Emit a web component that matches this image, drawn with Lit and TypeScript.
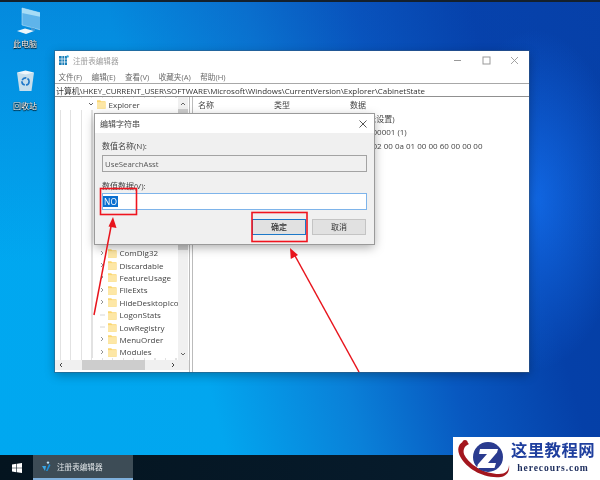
import { LitElement, html, css, svg } from "lit";
import { customElement } from "lit/decorators.js";

const folder = html`<svg class="folder" viewBox="0 0 9 10"><path d="M0 1h3.4l1 1H9v8H0z" fill="#fbd66f"/><path d="M0 3h9v7H0z" fill="#fde7a6"/></svg>`;
const chevR = html`<svg class="chev" viewBox="0 0 6 6"><path d="M2 1l2 2-2 2" fill="none" stroke="#888" stroke-width=".9"/></svg>`;
const dash = html`<svg class="chev" viewBox="0 0 6 6"><path d="M1 3h5" stroke="#ccc" stroke-width=".8"/></svg>`;

const TREE: [string, boolean][] = [
  ["ComDlg32", true], ["Discardable", true], ["FeatureUsage", true], ["FileExts", true],
  ["HideDesktopIco", true], ["LogonStats", false], ["LowRegistry", false], ["MenuOrder", true], ["Modules", true],
];

@customElement("app-root")
export class AppRoot extends LitElement {
  static styles = css`
    :host { display: block; width: 600px; height: 480px; overflow: hidden; font-family: "Open Sans","Noto Sans CJK SC",sans-serif; }
    * { box-sizing: border-box; }
    .screen { position: relative; width: 600px; height: 480px; display: flex; flex-direction: column; overflow: hidden; filter: blur(.4px);
      background:
        radial-gradient(ellipse 90px 170px at 535px 200px, rgba(20,115,245,.75), rgba(20,115,245,0)),
        linear-gradient(180deg, rgba(10,70,180,.3), rgba(10,70,180,0) 55%),
        linear-gradient(75deg, #00a8f0 0%, #02a6ef 32%, #0a80d8 51%, #0858c0 66%, #0540a8 82%, #053ea4 100%); }
    .topline { height: 2px; background: #14202c; flex: none; }
    .desk { flex: 1; display: flex; flex-direction: column; align-items: flex-start; padding: 5px 0 0 5px; gap: 19.5px; }
    .dicon { width: 40px; display: flex; flex-direction: column; align-items: center; gap: 1px; color: #fff; font-size: 8px; line-height: 11px; text-shadow: 0 0 1px #000, 0 1px 1px #000; }
    .dicon svg { width: 30px; height: 30px; display: block; }
    .win { position: absolute; left: 55px; top: 51px; width: 474px; height: 321px; background: #fff; box-shadow: 0 0 0 1px rgba(60,90,120,.5), 0 3px 10px rgba(0,0,0,.3); display: flex; flex-direction: column; font-size: 8px; color: #333; }
    .title { height: 18px; display: flex; align-items: center; padding: 0 0 0 4px; color: #a0a0a0; flex: none; font-size: 7.6px; }
    .title svg.app { width: 10px; height: 10px; margin-right: 4px; }
    .title .t { flex: 1; }
    .wbtn { width: 28.5px; display: flex; justify-content: center; }
    .wbtn svg { width: 9px; height: 9px; }
    .menu { height: 14px; display: flex; align-items: center; padding-left: 3.5px; gap: 9.5px; color: #6a6a6a; flex: none; font-size: 7.6px; }
    .addr { height: 14px; border-top: 1px solid #a8a8a8; border-bottom: 1px solid #909090; display: flex; align-items: center; padding-left: 1px; color: #333; flex: none; font-size: 7.93px; white-space: nowrap; overflow: hidden; }
    .panes { flex: 1; display: flex; min-height: 0; }
    .left { width: 135px; flex: none; display: flex; flex-direction: column; border-right: 1px solid #bbb; padding-bottom: 2px; }
    .treewrap { flex: 1; display: flex; min-height: 0; }
    .tree { flex: 1; min-width: 0; overflow: hidden; display: flex; flex-direction: column; background: repeating-linear-gradient(90deg, #fff 0 5px, #e2e2e2 5px 6px, #fff 6px 10.5px); padding-top: 1px; padding-bottom: 2px; }
    .row { height: 12.4px; flex: none; display: flex; align-items: center; gap: 3px; white-space: nowrap; font-size: 8px; color: #444; background: #fff; }
    .row.top { padding-left: 31px; margin-left: 2px; }
    .row.sub { margin-left: 37px; padding-left: 6px; border-left: 1px solid #e2e2e2; }
    .spacer { flex: 1; margin-left: 37px; background: #fff; border-left: 1px solid #e2e2e2; }
    .folder { width: 8.5px; height: 10px; flex: none; }
    .chev { width: 6px; height: 6px; flex: none; }
    .vbar { width: 10px; flex: none; margin-right: 1px; background: #f0f0f0; display: flex; flex-direction: column; align-items: center; }
    .vbar svg { width: 6px; height: 6px; flex: none; }
    .vbar .up { margin: 4px 0 2px; }
    .vbar .thumb { width: 10px; height: 141px; background: #cdcdcd; flex: none; }
    .vbar .fill { flex: 1; }
    .vbar .down { margin-bottom: 3px; }
    .hbar { height: 10px; flex: none; background: #f0f0f0; display: flex; align-items: center; padding: 0 3px; }
    .hbar .thumb { width: 63px; height: 10px; background: #cdcdcd; margin-left: 18px; margin-right: 25px; }
    .hbar svg { width: 6px; height: 6px; flex: none; }
    .right { flex: 1; margin-left: 2px; border-left: 1px solid #bbb; min-width: 0; padding: 0 0 0 5px; }
    .cols { display: grid; grid-template-columns: 76px 76px 1fr; line-height: 13.4px; white-space: nowrap; color: #444; font-size: 8px; }
    .cols.head { height: 15px; align-items: center; }
    .dlg { position: absolute; left: 95px; top: 114px; width: 279px; height: 130px; background: #f0f0f0; box-shadow: 0 0 0 1px #9a9a9a, 0 3px 10px rgba(0,0,0,.35); display: flex; flex-direction: column; font-size: 8px; color: #444; }
    .dtitle { height: 19px; background: #fff; display: flex; align-items: center; justify-content: space-between; padding: 0 7px 0 5px; flex: none; }
    .dtitle svg { width: 8px; height: 8px; }
    .dbody { padding: 6px 7px 0; display: flex; flex-direction: column; }
    .lbl { height: 13px; line-height: 13px; margin-bottom: 3px; }
    .lbl.second { margin-bottom: 1px; }
    .input { height: 17px; display: flex; align-items: center; padding-left: 2px; font-size: 7.8px; }
    .input.ro { background: #f0f0f0; border: 1px solid #a3a3a3; color: #555; margin-bottom: 6.5px; }
    .input.ed { background: #fff; border: 1px solid #7eb4ea; padding-left: 0; }
    .sel { background: #0a6fd0; color: #fff; width: 15px; margin-left: 0; text-align: center; line-height: 11px; font-size: 8.4px; }
    .btns { display: flex; justify-content: flex-end; gap: 6px; margin-top: 9px; padding-right: 1px; }
    .btn { width: 54px; height: 16px; background: #e1e1e1; border: 1px solid #c4c4c4; display: flex; align-items: center; justify-content: center; color: #333; }
    .btn.def { border: 1.5px solid #1c78c8; font-weight: 500; }
    .marks { position: absolute; inset: 0; width: 600px; height: 480px; pointer-events: none; }
    .bar { height: 25px; flex: none; background: linear-gradient(90deg, #04141f, #061a2a 60%, #062030); display: flex; align-items: stretch; }
    .start { width: 33px; display: flex; align-items: center; justify-content: center; }
    .start svg { width: 10px; height: 10px; }
    .task { width: 100px; background: #3d4c56; border-bottom: 2px solid #7fb0dc; display: flex; align-items: center; gap: 6px; padding-left: 8px; color: #dfe4e7; font-size: 7.6px; }
    .task svg { width: 10px; height: 11px; }
    .logo { position: absolute; left: 453px; top: 437px; width: 147px; height: 43px; background: #fff; display: flex; align-items: center; }
    .logo svg { width: 57px; height: 43px; flex: none; }
    .brand { width: 86px; display: flex; flex-direction: column; align-items: center; }
    .cn { font-size: 16.4px; line-height: 20px; font-weight: 700; color: #1f3f9e; letter-spacing: .4px; white-space: nowrap; margin-top: -4px; }
    .en { font-family: "Liberation Serif", serif; font-size: 9.6px; line-height: 12px; font-weight: 700; color: #1c2c5c; letter-spacing: .9px; margin-top: 2px; }
  `;

  render() {
    return html`<div class="screen">
      <div class="topline"></div>
      <div class="desk">
        <div class="dicon">
          <svg viewBox="0 0 30 30"><path d="M12 1l19 5v17L12 18z" fill="#5fb4ea"/><path d="M12 1l19 5v4L12 6z" fill="#a6dcf6"/><path d="M12 1l19 5v17L12 18z" fill="none" stroke="#b8e2f6" stroke-width=".6"/><path d="M21 20.5l4 1v2.5l-4-1z" fill="#3f96d4"/><path d="M7 24l8-2.5 9 2.5-8 3z" fill="#eef6fb"/></svg>
          <span>此电脑</span>
        </div>
        <div class="dicon">
          <svg viewBox="0 0 30 30"><path d="M7 3.5h17l-2.5 18.5H9.5z" fill="#c6deec"/><path d="M7 3.5l8.5-2 8.5 2-8.5 2z" fill="#eef6fb"/><circle cx="15.5" cy="12.5" r="3.6" fill="none" stroke="#1f78c8" stroke-width="1.6" stroke-dasharray="5 1.2"/></svg>
          <span>回收站</span>
        </div>
      </div>

      <div class="win">
        <div class="title">
          <svg class="app" viewBox="0 0 10 10"><rect y="1" width="8" height="9" fill="#1b7fb8"/><path d="M3 1v9M5.5 1v9M0 4h8M0 7h8" stroke="#fff" stroke-width=".7"/><circle cx="8.6" cy="1.4" r="1.2" fill="#39a9dc"/></svg>
          <span class="t">注册表编辑器</span>
          <span class="wbtn"><svg viewBox="0 0 9 9"><path d="M1 4.5h7" stroke="#999"/></svg></span>
          <span class="wbtn"><svg viewBox="0 0 9 9"><rect x="1" y="1" width="7" height="7" fill="none" stroke="#999"/></svg></span>
          <span class="wbtn"><svg viewBox="0 0 9 9"><path d="M1 1l7 7M8 1L1 8" stroke="#999" stroke-width=".9"/></svg></span>
        </div>
        <div class="menu"><span>文件(F)</span><span>编辑(E)</span><span>查看(V)</span><span>收藏夹(A)</span><span>帮助(H)</span></div>
        <div class="addr">计算机\\HKEY_CURRENT_USER\\SOFTWARE\\Microsoft\\Windows\\CurrentVersion\\Explorer\\CabinetState</div>
        <div class="panes">
          <div class="left">
            <div class="treewrap">
              <div class="tree">
                <div class="row top"><svg class="chev" viewBox="0 0 6 6"><path d="M1 2l2 2 2-2" fill="none" stroke="#555" stroke-width=".9"/></svg>${folder}<span>Explorer</span></div>
                <div class="row sub">${chevR}${folder}</div>
                <div class="spacer"></div>
                ${TREE.map(([n, c]) => html`<div class="row sub">${c ? chevR : dash}${folder}<span>${n}</span></div>`)}
              </div>
              <div class="vbar">
                <svg class="up" viewBox="0 0 6 6"><path d="M1 4l2-2 2 2" fill="none" stroke="#555" stroke-width=".9"/></svg>
                <span class="thumb"></span>
                <span class="fill"></span>
                <svg class="down" viewBox="0 0 6 6"><path d="M1 2l2 2 2-2" fill="none" stroke="#555" stroke-width=".9"/></svg>
              </div>
            </div>
            <div class="hbar">
              <svg viewBox="0 0 6 6"><path d="M4 1L2 3l2 2" fill="none" stroke="#444"/></svg>
              <span class="thumb"></span>
              <svg viewBox="0 0 6 6"><path d="M2 1l2 2-2 2" fill="none" stroke="#444"/></svg>
            </div>
          </div>
          <div class="right">
            <div class="cols head"><span>名称</span><span>类型</span><span>数据</span></div>
            <div class="cols"><span></span><span></span><span>(数值未设置)</span></div>
            <div class="cols"><span></span><span></span><span>0x00000001 (1)</span></div>
            <div class="cols"><span></span><span></span><span>24 00 02 00 0a 01 00 00 60 00 00 00</span></div>
          </div>
        </div>
      </div>

      <div class="dlg">
        <div class="dtitle"><span>编辑字符串</span><svg viewBox="0 0 8 8"><path d="M.5.5l7 7M7.5.5l-7 7" stroke="#444" stroke-width=".9"/></svg></div>
        <div class="dbody">
          <div class="lbl">数值名称(N):</div>
          <div class="input ro">UseSearchAsst</div>
          <div class="lbl second">数值数据(V):</div>
          <div class="input ed"><span class="sel">NO</span></div>
          <div class="btns"><div class="btn def">确定</div><div class="btn">取消</div></div>
        </div>
      </div>

      <svg class="marks" viewBox="0 0 600 480" aria-hidden="true">
        ${svg`<rect x="100.5" y="188.5" width="36" height="26" fill="none" stroke="#f0141e" stroke-width="1.6"/>
        <rect x="252" y="212.5" width="55" height="29" fill="none" stroke="#f0141e" stroke-width="1.6"/>
        <path d="M94 315L111.5 224" stroke="#e8141c" stroke-width="1.5"/>
        <path d="M113 217l-4.5 9.5 8 1.5z" fill="#e8141c"/>
        <path d="M359 372L294 254" stroke="#e8141c" stroke-width="1.5"/>
        <path d="M290 248l.8 11 7.2-4z" fill="#e8141c"/>`}
      </svg>

      <div class="bar">
        <div class="start"><svg viewBox="0 0 10 10"><path d="M0 1.5l4.4-.7v3.9H0zM5 .7L10 0v4.7H5zM0 5.3h4.4v3.9L0 8.5zM5 5.3h5V10l-5-.7z" fill="#fff"/></svg></div>
        <div class="task"><svg viewBox="0 0 10 11"><path d="M1 5l3 5 1-5z" fill="#3aa7e6"/><path d="M5 10l3-7 1.5 1L6.5 10z" fill="#1d8fd8"/><circle cx="7" cy="1.6" r="1.2" fill="#bfe3f7"/></svg><span>注册表编辑器</span></div>
      </div>

      <div class="logo">
        <svg viewBox="0 0 57 43">
          <circle cx="12" cy="5.5" r="2.6" fill="#a3161e"/>
          <path d="M13 4C5 5 3 13 8 21 14 31 30 42 48 40 54 39 57 34 56 28 56 34 52 37 46 37 32 37 17 28 12 19 9 14 11 9 16 7z" fill="#a3161e"/>
          <circle cx="35" cy="20" r="15" fill="#2a3b8f"/>
          <path d="M27 12h18l-1 3.5L35 26h8l-1.5 5H24l.8-3.5L34 17h-8z" fill="#fff"/>
        </svg>
        <div class="brand"><span class="cn">这里教程网</span><span class="en">herecours.com</span></div>
      </div>
    </div>`;
  }
}
